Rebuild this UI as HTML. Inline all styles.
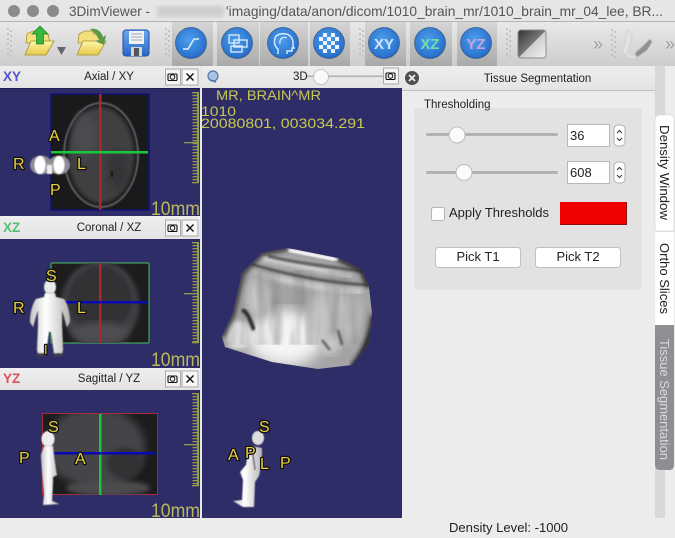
<!DOCTYPE html>
<html><head><meta charset="utf-8"><style>
html,body{margin:0;padding:0;width:675px;height:538px;overflow:hidden;background:#ececec}
svg{display:block;font-family:"Liberation Sans",sans-serif}
.lab{font-size:16px;fill:#e8d040;stroke:#111;stroke-width:2.6px;paint-order:stroke;stroke-linejoin:round}
.mm{font-size:19px;fill:#b9b95c}
.ov{font-size:14px;fill:#c9c952}
.hd{font-size:11.5px;fill:#222}
.ui{font-size:13px;fill:#222}
</style></head><body>
<svg width="675" height="538" viewBox="0 0 675 538" xmlns="http://www.w3.org/2000/svg">
<defs>
<linearGradient id="tb" x1="0" y1="0" x2="0" y2="1"><stop offset="0" stop-color="#e9e9e9"/><stop offset="1" stop-color="#cdcdcd"/></linearGradient>
<linearGradient id="seg" x1="0" y1="0" x2="0" y2="1"><stop offset="0" stop-color="#d6d6d6"/><stop offset="1" stop-color="#a9a9a9"/></linearGradient>
<linearGradient id="ttl" x1="0" y1="0" x2="0" y2="1"><stop offset="0" stop-color="#eeeeee"/><stop offset="1" stop-color="#e4e4e4"/></linearGradient>
<radialGradient id="ball" cx=".45" cy=".4" r=".7"><stop offset="0" stop-color="#4f9fec"/><stop offset=".75" stop-color="#2a74cf"/><stop offset="1" stop-color="#1b569f"/></radialGradient>
<linearGradient id="fold" x1="0" y1="0" x2="0" y2="1"><stop offset="0" stop-color="#fff6a6"/><stop offset="1" stop-color="#e6c94c"/></linearGradient>
<linearGradient id="flop" x1="0" y1="0" x2="0" y2="1"><stop offset="0" stop-color="#6aa8ee"/><stop offset="1" stop-color="#2a66c8"/></linearGradient>
<linearGradient id="gsq" x1="0" y1="0" x2="1" y2="1"><stop offset="0" stop-color="#333"/><stop offset=".5" stop-color="#777"/><stop offset=".5" stop-color="#ccc"/><stop offset="1" stop-color="#f4f4f4"/></linearGradient>
<linearGradient id="body" x1="0" y1="0" x2="1" y2="0"><stop offset="0" stop-color="#c4c4c4"/><stop offset=".4" stop-color="#fff"/><stop offset="1" stop-color="#b4b4b4"/></linearGradient>
<filter id="b05"><feGaussianBlur stdDeviation=".5"/></filter>
<filter id="b1"><feGaussianBlur stdDeviation="1"/></filter>
<filter id="b2"><feGaussianBlur stdDeviation="2"/></filter>
<filter id="b4"><feGaussianBlur stdDeviation="4"/></filter>
<filter id="b7"><feGaussianBlur stdDeviation="7"/></filter>
<filter id="streak" x="0" y="0" width="100%" height="100%"><feTurbulence type="fractalNoise" baseFrequency="0.085 0.012" numOctaves="3" seed="4"/><feColorMatrix type="matrix" values="0 0 0 0 .15  0 0 0 0 .15  0 0 0 0 .15  2.4 0 0 0 -.85"/><feGaussianBlur stdDeviation="1"/></filter>
<clipPath id="vol"><path d="M262 253L288 248L338 258L362 270L369 287L372 313L369 343L352 365L318 369L272 362L225 347L222 337L233 313L242 273Z"/></clipPath>
<clipPath id="cxy"><rect x="51" y="94" width="98" height="116"/></clipPath>
<clipPath id="cxz"><rect x="51" y="263" width="98" height="80"/></clipPath>
<clipPath id="cyz"><rect x="43" y="414" width="115" height="81"/></clipPath>
<g id="dots"><circle cx="0" cy="0" r="1" fill="#bbb"/><circle cx="3" cy="2" r="1" fill="#bbb"/><circle cx="0" cy="5" r="1" fill="#bbb"/><circle cx="3" cy="7" r="1" fill="#bbb"/><circle cx="0" cy="10" r="1" fill="#bbb"/><circle cx="3" cy="12" r="1" fill="#bbb"/><circle cx="0" cy="15" r="1" fill="#bbb"/><circle cx="3" cy="17" r="1" fill="#bbb"/><circle cx="0" cy="20" r="1" fill="#bbb"/><circle cx="3" cy="22" r="1" fill="#bbb"/><circle cx="0" cy="25" r="1" fill="#bbb"/><circle cx="3" cy="27" r="1" fill="#bbb"/></g>
<g id="cam"><rect x="-7" y="-8" width="15" height="16" fill="#f4f4f4" stroke="#aaa"/><rect x="-4.5" y="-3" width="9" height="6.5" rx="1" fill="none" stroke="#111" stroke-width="1.1"/><circle cx="0" cy="0" r="2.3" fill="none" stroke="#111"/></g>
<g id="xb"><rect x="-8" y="-8" width="16" height="16" fill="#f6f6f6" stroke="#aaa"/><path d="M-3.5 -3.5L3.5 3.5M3.5 -3.5L-3.5 3.5" stroke="#111" stroke-width="1.4"/></g>
</defs>

<rect width="675" height="538" fill="#ececec"/>

<!-- title bar -->
<rect width="675" height="22" fill="#e6e6e6"/>
<rect y="21" width="675" height="1" fill="#b4b4b4"/>
<circle cx="14" cy="11" r="6" fill="#8b8b8b"/><circle cx="33" cy="11" r="6" fill="#8b8b8b"/><circle cx="53" cy="11" r="6" fill="#8b8b8b"/>
<text x="69" y="16" font-size="14" fill="#555" textLength="81" lengthAdjust="spacingAndGlyphs">3DimViewer -</text>
<rect x="157" y="6" width="67" height="11" fill="#cdcdcd" filter="url(#b2)"/>
<text x="226" y="16" font-size="14" fill="#555" textLength="437" lengthAdjust="spacingAndGlyphs">'imaging/data/anon/dicom/1010_brain_mr/1010_brain_mr_04_lee, BR...</text>

<!-- toolbar -->
<rect y="22" width="675" height="44" fill="url(#tb)"/>
<rect x="172" y="22" width="41" height="44" fill="url(#seg)"/>
<rect x="217" y="22" width="42" height="44" fill="url(#seg)"/>
<rect x="260" y="22" width="48" height="44" fill="url(#seg)"/>
<rect x="310" y="22" width="40" height="44" fill="url(#seg)"/>
<rect x="365" y="22" width="41" height="44" fill="url(#seg)"/>
<rect x="410" y="22" width="42" height="44" fill="url(#seg)"/>
<rect x="457" y="22" width="40" height="44" fill="url(#seg)"/>
<use href="#dots" x="8" y="29"/><use href="#dots" x="166" y="29"/><use href="#dots" x="360" y="29"/><use href="#dots" x="507" y="29"/><use href="#dots" x="612" y="30"/>

<!-- folder 1 -->
<g stroke="#a89030" stroke-width=".8">
<path d="M27 34L33 31L40 31L42 34L48 34L50 43L26 43Z" fill="#f3df7c"/>
<path d="M31 41L54 41L46 55L25 55Z" fill="url(#fold)"/>
</g>
<path d="M40 26L48 34L43.500 34L43.500 44L36.500 44L36.500 34L32 34Z" fill="#35b83c" stroke="#1d7c22" stroke-width=".7"/>
<path d="M57 47L66 47L61.500 55Z" fill="#666"/>
<!-- folder 2 -->
<g stroke="#a89030" stroke-width=".8">
<path d="M79 34L85 31L92 31L94 34L100 34L102 43L78 43Z" fill="#f3df7c"/>
<path d="M83 41L106 41L98 55L77 55Z" fill="url(#fold)"/>
</g>
<path d="M90 29C97 28 101 31 103 37L106 35L104 45L95 41L99 40C97 35 94 32 90 29Z" fill="#5c9a4a"/>
<!-- floppy -->
<rect x="123" y="30" width="26" height="26" rx="3" fill="url(#flop)" stroke="#1e4fa0"/>
<rect x="129" y="31" width="15" height="13" fill="#f2f2f2"/>
<path d="M131 34H142M131 37H142M131 40H142" stroke="#9ab" stroke-width="1"/>
<rect x="131" y="47" width="11" height="9" fill="#d4d4d4"/><rect x="134" y="48" width="5" height="8" fill="#555"/>

<!-- round buttons -->
<g stroke="#3c5f8c" stroke-width=".8" fill="url(#ball)">
<circle cx="191" cy="43" r="15.500"/><circle cx="237" cy="43" r="15.500"/><circle cx="283" cy="43" r="15.500"/><circle cx="329" cy="43" r="15.500"/>
<circle cx="384" cy="43" r="15.500"/><circle cx="430" cy="43" r="15.500"/><circle cx="476" cy="43" r="15.500"/>
</g>
<path d="M183 49H188L194 39H199" fill="none" stroke="#dfeeff" stroke-width="1.5"/>
<g fill="none" stroke="#dfeeff" stroke-width="1.3"><rect x="229" y="35" width="10" height="8"/><rect x="234" y="40" width="13" height="7"/><rect x="231" y="46" width="11" height="6"/></g>
<path d="M278 54V49C274 46 274 41 275 38C277 33 287 32 291 37C294 41 293 44 293 46L294 48H292V51H287V54" fill="none" stroke="#dfeeff" stroke-width="1.400"/>
<path d="M280 44C279 39 283 36 287 38" fill="none" stroke="#dfeeff" stroke-width="1.200"/>
<g fill="#f0f6ff">
<rect x="323" y="33" width="4" height="4"/><rect x="331" y="33" width="4" height="4"/>
<rect x="319" y="37" width="4" height="4"/><rect x="327" y="37" width="4" height="4"/><rect x="335" y="37" width="4" height="4"/>
<rect x="323" y="41" width="4" height="4"/><rect x="331" y="41" width="4" height="4"/>
<rect x="319" y="45" width="4" height="4"/><rect x="327" y="45" width="4" height="4"/><rect x="335" y="45" width="4" height="4"/>
<rect x="323" y="49" width="4" height="4"/><rect x="331" y="49" width="4" height="4"/>
</g>
<text x="384" y="49" font-size="15" font-weight="bold" fill="#cfe4ff" text-anchor="middle">XY</text>
<text x="430" y="49" font-size="15" font-weight="bold" fill="#6fe0a8" text-anchor="middle">XZ</text>
<text x="476" y="49" font-size="15" font-weight="bold" fill="#c9a4dc" text-anchor="middle">YZ</text>
<rect x="518" y="30" width="28" height="28" rx="3" fill="url(#gsq)" stroke="#8a8a8a"/>
<text x="593" y="50" font-size="18" fill="#a2a2a2">»</text>
<text x="665" y="50" font-size="18" fill="#a2a2a2">»</text>
<g filter="url(#b05)">
<path d="M627 30L632 32L631 42L627 52L633 56L637 56L636 59L629 58L623 52Z" fill="#e3e3e3" stroke="#c4c4c4" stroke-width=".6"/>
<path d="M635 53L642 47L650 39L652 42L647 50L637 57Z" fill="#8f8f8f"/>
</g>

<!-- header rows -->
<rect x="0" y="66" width="200" height="22" fill="url(#ttl)"/>
<rect x="0" y="216" width="200" height="23" fill="url(#ttl)"/>
<rect x="0" y="368" width="200" height="22" fill="url(#ttl)"/>
<rect x="200" y="66" width="202" height="22" fill="url(#ttl)"/>
<text x="3" y="81" font-size="13.500" font-weight="bold" fill="#5555cc">XY</text>
<text x="109" y="80" class="hd" text-anchor="middle">Axial / XY</text>
<text x="3" y="232" font-size="13.500" font-weight="bold" fill="#55c070">XZ</text>
<text x="109" y="231" class="hd" text-anchor="middle">Coronal / XZ</text>
<text x="3" y="383" font-size="13.500" font-weight="bold" fill="#e05060">YZ</text>
<text x="109" y="382" class="hd" text-anchor="middle">Sagittal / YZ</text>
<use href="#cam" x="172.500" y="77"/><use href="#xb" x="190" y="77"/>
<use href="#cam" x="172.500" y="228"/><use href="#xb" x="190" y="228"/>
<use href="#cam" x="172.500" y="379"/><use href="#xb" x="190" y="379"/>
<circle cx="213" cy="76" r="5" fill="#a9c2e0" stroke="#4f76ad" stroke-width="1.200"/>
<path d="M210 80L216 82" stroke="#4f76ad" stroke-width="1.500"/>
<text x="293" y="80" class="hd">3D</text>
<rect x="307" y="75.500" width="77" height="1.600" fill="#b0b0b0"/>
<circle cx="321" cy="77" r="7.500" fill="#fafafa" stroke="#c2c2c2"/>
<use href="#cam" x="390.500" y="76"/>

<!-- viewports -->
<rect x="0" y="88" width="200" height="128" fill="#2f2d68"/>
<rect x="0" y="239" width="200" height="129" fill="#2f2d68"/>
<rect x="0" y="390" width="200" height="128" fill="#2f2d68"/>
<rect x="202" y="88" width="200" height="430" fill="#2f2d68"/>
<rect x="200" y="66" width="2" height="452" fill="#e6e6ee"/>
<rect x="0" y="88" width="200" height="1" fill="#1f1e50"/>

<!-- axial -->
<rect x="51" y="94" width="98" height="116" fill="#1a1a1c" stroke="#10107a" stroke-width="1.500" rx="1"/>
<g clip-path="url(#cxy)">
<ellipse cx="101" cy="155" rx="37" ry="52" fill="none" stroke="#5e5e62" stroke-width="2" filter="url(#b05)"/>
<ellipse cx="101" cy="155" rx="33" ry="48" fill="#3f3f43" filter="url(#b2)"/>
<ellipse cx="85" cy="135" rx="12" ry="22" fill="#4c4c50" filter="url(#b4)"/>
<ellipse cx="118" cy="170" rx="11" ry="20" fill="#343438" filter="url(#b4)"/>
<ellipse cx="112" cy="174" rx="1.500" ry="3.500" fill="#1c1c1c"/>
</g>
<rect x="99" y="94" width="2.500" height="116" fill="#a8262c"/>
<rect x="51" y="151" width="97" height="2.500" fill="#16c83a"/>

<!-- coronal -->
<rect x="51" y="263" width="98" height="80" fill="#1d1d1e" stroke="#48c060" rx="1"/>
<g clip-path="url(#cxz)">
<ellipse cx="100" cy="305" rx="39" ry="44" fill="#404044" filter="url(#b2)"/>
<ellipse cx="100" cy="300" rx="32" ry="34" fill="#333336" filter="url(#b2)"/>
<ellipse cx="100" cy="332" rx="28" ry="10" fill="#505052" filter="url(#b4)"/>
</g>
<rect x="99" y="263" width="2.500" height="80" fill="#a8262c"/>
<rect x="60" y="301" width="88" height="2.500" fill="#0808b4"/>

<!-- sagittal -->
<rect x="42.500" y="413.500" width="115" height="81" fill="#1c1c1d" stroke="#a82a3c"/>
<g clip-path="url(#cyz)">
<ellipse cx="95" cy="447" rx="50" ry="40" fill="#444448" filter="url(#b4)"/>
<ellipse cx="125" cy="463" rx="18" ry="16" fill="#333336" filter="url(#b2)"/>
<ellipse cx="108" cy="488" rx="42" ry="8" fill="#4c4c4e" filter="url(#b2)"/>
</g>
<rect x="99" y="414" width="2.500" height="81" fill="#16c83a"/>
<rect x="54" y="452" width="102" height="2.500" fill="#0808b4"/>

<!-- rulers -->
<g fill="#949c48">
<rect x="197" y="92" width="2" height="91"/><rect x="184" y="142" width="14" height="1.300"/>
<rect x="197" y="242" width="2" height="101"/><rect x="184" y="293" width="14" height="1.300"/>
<rect x="197" y="393" width="2" height="93"/><rect x="184" y="444" width="14" height="1.300"/>
<path fill="none" stroke="#949c48" stroke-width="5" stroke-dasharray="1.200 1.800" d="M195 92V183M195 242V343M195 393V486"/>
<rect x="192" y="92" width="6" height="1.300"/><rect x="192" y="182" width="6" height="1.300"/>
<rect x="192" y="242" width="6" height="1.300"/><rect x="192" y="342" width="6" height="1.300"/>
<rect x="192" y="393" width="6" height="1.300"/><rect x="192" y="485" width="6" height="1.300"/>
</g>
<text x="151" y="215" class="mm" textLength="49" lengthAdjust="spacingAndGlyphs">10mm</text>
<text x="151" y="366" class="mm" textLength="49" lengthAdjust="spacingAndGlyphs">10mm</text>
<text x="151" y="517" class="mm" textLength="49" lengthAdjust="spacingAndGlyphs">10mm</text>

<!-- overlay text -->
<text x="216" y="100" class="ov" textLength="105" lengthAdjust="spacingAndGlyphs">MR, BRAIN^MR</text>
<text x="201" y="116" class="ov" textLength="35" lengthAdjust="spacingAndGlyphs">1010</text>
<text x="201" y="128" class="ov" textLength="164" lengthAdjust="spacingAndGlyphs">20080801, 003034.291</text>

<!-- figures -->
<g filter="url(#b05)">
<ellipse cx="41" cy="165" rx="11" ry="9.500" fill="#8d8d96"/><ellipse cx="59" cy="165" rx="11" ry="9.500" fill="#8d8d96"/>
<rect x="44" y="163" width="12" height="10" fill="#9a9a9f"/>
<ellipse cx="40" cy="165" rx="5.500" ry="9" fill="#fff"/><ellipse cx="59" cy="165" rx="5.500" ry="9" fill="#fff"/>
<rect x="47" y="165" width="5" height="9" fill="#eee"/>
</g>
<g filter="url(#b05)">
<ellipse cx="50" cy="287" rx="6" ry="7.500" fill="#e9e9e9"/>
<path d="M45 293H55L56 297L64 299C67 303 70 312 70 322L67 327C65 321 64 315 62 311L62 326L63 350L62 354H54L51 332H49L46 354H38L37 350L38 326L38 311C36 315 35 321 33 327L30 322C30 312 33 303 36 299L44 297Z" fill="url(#body)" stroke="#8c8c8c" stroke-width=".5"/>
<path d="M37 353H46V356H37ZM54 353H63V356H54Z" fill="#444"/>
</g>
<g filter="url(#b05)">
<ellipse cx="48" cy="439" rx="6.500" ry="8" fill="#eee"/>
<path d="M44 446H53L54 456L56 470L57 475L53 477L53 482L52 501L59 504L43 505L44 495L42 470L41 455Z" fill="url(#body)" stroke="#9a9a9a" stroke-width=".4"/>
</g>
<g filter="url(#b05)">
<ellipse cx="258" cy="438" rx="6" ry="7" fill="#dedede"/>
<path d="M252 446L262 448L262 462L259 476L255 482L254 507L243 507L233 501L242 500L243 480L240 472L246 465L248 452Z" fill="url(#body)"/>
<path d="M252 448L255 470" stroke="#666" stroke-width="1.500"/>
</g>

<!-- labels -->
<text x="49" y="141" class="lab">A</text><text x="13" y="169" class="lab">R</text><text x="77" y="169" class="lab">L</text><text x="50" y="195" class="lab">P</text>
<text x="46" y="281" class="lab">S</text><text x="13" y="313" class="lab">R</text><text x="77" y="313" class="lab">L</text><text x="44" y="354" class="lab" style="font-size:13px">I</text>
<text x="48" y="432" class="lab">S</text><text x="19" y="463" class="lab">P</text><text x="75" y="464" class="lab">A</text>
<text x="259" y="432" class="lab">S</text><text x="228" y="460" class="lab">A</text><text x="245" y="458" class="lab">P</text><text x="260" y="469" class="lab">L</text><text x="280" y="468" class="lab">P</text>

<!-- volume -->
<g clip-path="url(#vol)">
<rect x="215" y="240" width="165" height="135" fill="#a4a4a6"/>
<ellipse cx="285" cy="338" rx="38" ry="28" fill="#f4f4f4" filter="url(#b7)"/>
<ellipse cx="238" cy="335" rx="13" ry="14" fill="#e0e0e0" filter="url(#b2)"/>
<ellipse cx="335" cy="315" rx="26" ry="28" fill="#c4c4c4" filter="url(#b7)"/>
<ellipse cx="258" cy="295" rx="14" ry="20" fill="#cccccc" filter="url(#b4)"/>
<path d="M262 258C290 262 320 270 350 276" fill="none" stroke="#d4d4d4" stroke-width="6" filter="url(#b2)"/>
<path d="M252 272C290 282 320 288 362 292" fill="none" stroke="#cfcfcf" stroke-width="6" filter="url(#b2)"/>
<rect x="215" y="270" width="165" height="75" filter="url(#streak)" opacity=".4"/>
<path d="M248 263C270 270 320 283 370 285" fill="none" stroke="#48484a" stroke-width="2.500" filter="url(#b1)"/>
<path d="M268 256C300 264 340 268 368 272" fill="none" stroke="#555557" stroke-width="3" filter="url(#b1)"/>
<path d="M288 250L338 260" stroke="#f2f2f2" stroke-width="3.500" filter="url(#b05)"/>
<path d="M242 310C248 312 250 320 254 330" fill="none" stroke="#2a2a2a" stroke-width="4" filter="url(#b1)"/>
<ellipse cx="330" cy="345" rx="10" ry="10" fill="#c8c8c8" filter="url(#b4)"/>
<path d="M322 340L330 350M338 330L342 345" stroke="#444" stroke-width="2" filter="url(#b1)"/>
<path d="M352 368C366 350 372 335 374 315" fill="none" stroke="#1a1a1a" stroke-width="6" filter="url(#b2)"/>
<path d="M222 337L233 313L242 273L262 253L288 248" fill="none" stroke="#333" stroke-width="5" filter="url(#b2)"/>
<path d="M338 258L362 270L369 287" fill="none" stroke="#2a2a2a" stroke-width="6" filter="url(#b2)"/>
</g>

<!-- tissue panel -->
<rect x="402" y="66" width="253" height="452" fill="#ececec"/>
<rect x="402" y="66" width="253" height="24" fill="url(#ttl)"/>
<rect x="402" y="90" width="253" height="1" fill="#c0c0c0"/>
<circle cx="412" cy="78" r="7" fill="#4f4f4f"/>
<path d="M409 75L415 81M415 75L409 81" stroke="#eee" stroke-width="1.800"/>
<text x="537.500" y="82" class="hd" text-anchor="middle">Tissue Segmentation</text>

<rect x="414" y="108" width="228" height="182" rx="3" fill="#e2e2e2"/>
<text x="424" y="108" font-size="11.500" fill="#222">Thresholding</text>
<rect x="426" y="133" width="132" height="3" rx="1.500" fill="#b2b2b2"/>
<circle cx="457" cy="135" r="8" fill="#fbfbfb" stroke="#bcbcbc"/>
<rect x="426" y="171" width="132" height="3" rx="1.500" fill="#b2b2b2"/>
<circle cx="464" cy="172.500" r="8" fill="#fbfbfb" stroke="#bcbcbc"/>
<rect x="567.500" y="124.500" width="42" height="22" fill="#fff" stroke="#b8b8b8"/>
<text x="570" y="140" class="ui">36</text>
<rect x="567.500" y="161.500" width="42" height="22" fill="#fff" stroke="#b8b8b8"/>
<text x="570" y="177" class="ui">608</text>
<rect x="614" y="125" width="11" height="21" rx="4" fill="#fff" stroke="#b0b0b0"/>
<path d="M617 133L619.500 130.500L622 133M617 138L619.500 140.500L622 138" fill="none" stroke="#333"/>
<rect x="614" y="162" width="11" height="21" rx="4" fill="#fff" stroke="#b0b0b0"/>
<path d="M617 170L619.500 167.500L622 170M617 175L619.500 177.500L622 175" fill="none" stroke="#333"/>
<rect x="431.500" y="207.500" width="13" height="13" rx="2" fill="#fff" stroke="#b5b5b5"/>
<text x="449" y="217" class="ui" textLength="100" lengthAdjust="spacingAndGlyphs">Apply Thresholds</text>
<rect x="560" y="202" width="67" height="23" fill="#f00000"/>
<path d="M560 224.500H627M626.500 202V225" stroke="#8a1010" stroke-width="1"/>
<rect x="435.500" y="247.500" width="85" height="20" rx="3" fill="#fff" stroke="#c0c0c0"/>
<rect x="535.500" y="247.500" width="85" height="20" rx="3" fill="#fff" stroke="#c0c0c0"/>
<text x="478" y="261" class="ui" text-anchor="middle">Pick T1</text>
<text x="578" y="261" class="ui" text-anchor="middle">Pick T2</text>

<!-- right side tabs -->
<rect x="655" y="66" width="10" height="452" fill="#d8d8d8"/>
<rect x="665" y="66" width="10" height="452" fill="#ececec"/>
<path d="M655 120Q655 115 660 115H670Q674 115 674 120V231H655Z" fill="#fff" stroke="#d0d0d0" stroke-width=".6"/>
<rect x="655" y="232" width="19" height="93" fill="#fff"/>
<rect x="655" y="231" width="19" height="1" fill="#ddd"/>
<path d="M655 325H674V465Q674 470 669 470H660Q655 470 655 465Z" fill="#8e8e93"/>
<text transform="translate(660,125) rotate(90)" font-size="13" fill="#222" textLength="95" lengthAdjust="spacingAndGlyphs">Density Window</text>
<text transform="translate(660,243) rotate(90)" font-size="13" fill="#222" textLength="71" lengthAdjust="spacingAndGlyphs">Ortho Slices</text>
<text transform="translate(660,339) rotate(90)" font-size="12.500" fill="#dcdcdc" textLength="121" lengthAdjust="spacingAndGlyphs">Tissue Segmentation</text>

<!-- status -->
<rect x="0" y="518" width="675" height="20" fill="#ececec"/>
<text x="449" y="532" class="ui" textLength="119" lengthAdjust="spacingAndGlyphs">Density Level: -1000</text>
</svg>
</body></html>
